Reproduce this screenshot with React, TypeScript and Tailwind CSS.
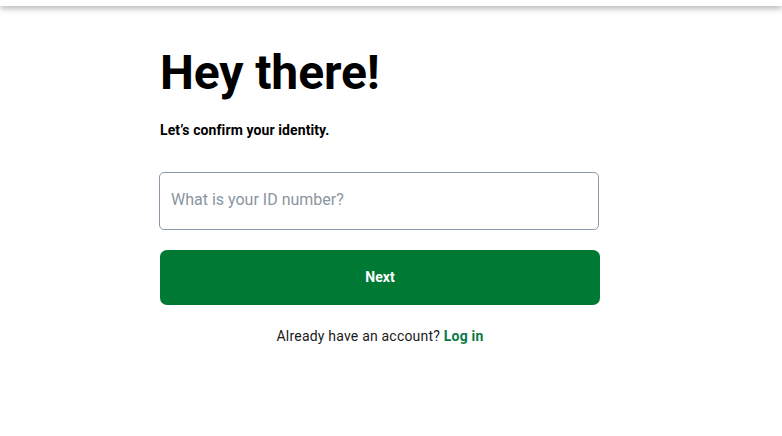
const App = () => {
  return (
    <div className="min-h-[436px] bg-white font-['Roboto',sans-serif] text-black">
      <div className="h-[6px] bg-white shadow-[0_2px_6px_rgba(0,0,0,0.35)]" />
      <main className="mx-auto w-[462px] pt-[43px]">
        <div className="w-[440px]">
          <h1 className="text-5xl leading-none font-bold tracking-[-0.1px]">Hey there!</h1>
          <p className="mt-[23px] text-sm font-bold tracking-[0.1px]">Let’s confirm your identity.</p>
          <input
            type="text"
            placeholder="What is your ID number?"
            className="mt-[32px] -ml-px block h-[58px] w-full rounded-[5px] border border-[#8a99ab] px-[11px] pb-[3px] text-base outline-none placeholder:text-[#8a95a1]"
          />
          <button className="mt-[20px] block h-[55px] w-[440px] rounded-[7px] bg-[#007934] pb-[2px] text-sm font-bold text-white">
            Next
          </button>
          <p className="mt-[21px] text-center text-sm tracking-[0.2px] text-[#1a1a1a]">
            Already have an account?{" "}
            <a href="#" className="font-bold text-[#0b7a45]">
              Log in
            </a>
          </p>
        </div>
      </main>
    </div>
  )
}

export default App
